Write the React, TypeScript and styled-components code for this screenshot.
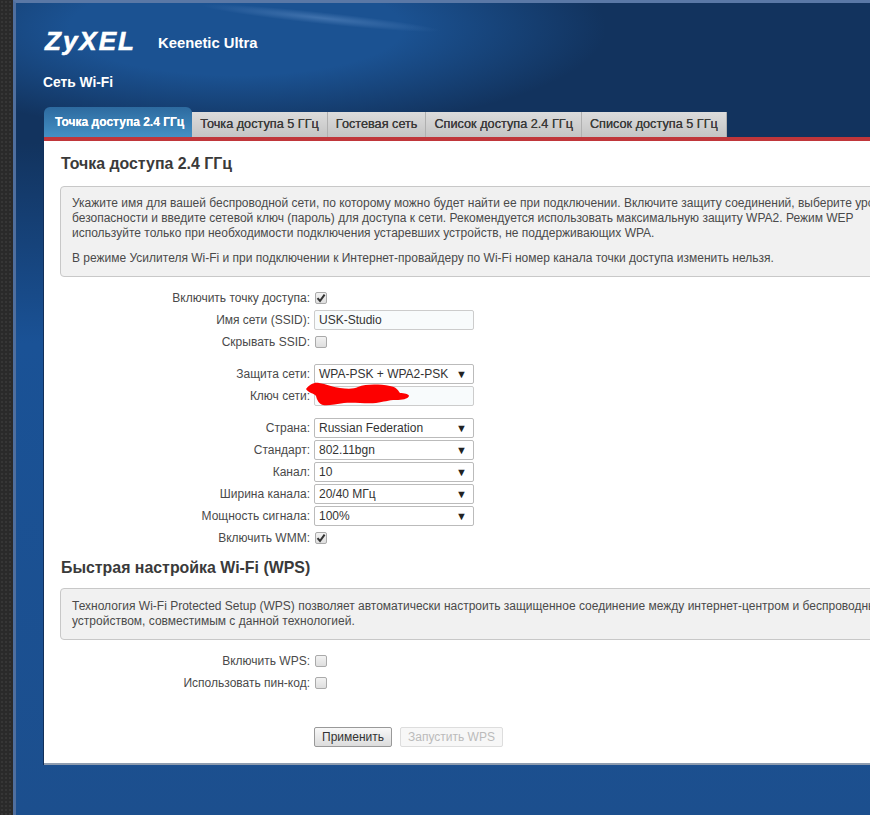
import React from 'react';
import styled, { createGlobalStyle } from 'styled-components';

const GlobalStyle = createGlobalStyle`
	html, body {
		margin: 0;
		padding: 0;
		background: #1c4f8e;
	}
	body {
		width: 870px;
		height: 815px;
		overflow: hidden;
		font-family: "Liberation Sans", Arial, sans-serif;
		font-size: 12px;
		color: #333;
	}
`;

const Page = styled.div`
	display: flex;
	width: 870px;
	height: 815px;
	overflow: hidden;
`;

const DarkStrip = styled.div`
	flex: 0 0 14px;
	background-color: #2a2a2a;
	background-image: radial-gradient(#363636 1px, transparent 1px);
	background-size: 4px 4px;
`;

const Main = styled.main`
	position: relative;
	flex: 1;
	min-width: 0;
	box-sizing: border-box;
	padding: 21px 0 0 28px;
	border-left: 3px solid #4f6f9f;
	border-top: 3px solid #5a78a6;
	margin-left: -1px;
	overflow: hidden;
	background:
		radial-gradient(ellipse 370px 105px at 220px 25px, #1b5292 0%, #1b5292 45%, rgba(27, 82, 146, 0) 100%),
		linear-gradient(180deg, #12335e 0, #12335e 140px, #1a5296 340px, #1c4f8e 100%);
	&::before {
		content: '';
		position: absolute;
		left: 185px;
		top: 9px;
		width: 240px;
		height: 12px;
		transform: rotate(6deg);
		background: radial-gradient(ellipse closest-side, rgba(100, 145, 200, 0.5), rgba(100, 145, 200, 0));
	}
`;

const Brand = styled.div`
	display: flex;
	align-items: center;
	height: 38px;
	color: #fff;
`;

const Logo = styled.span`
	font-size: 26px;
	font-weight: bold;
	font-style: italic;
	letter-spacing: 2px;
	-webkit-text-stroke: 0.6px #fff;
	width: 113px;
	margin: -3px 0 0 1px;
`;

const Model = styled.span`
	font-size: 14.8px;
	font-weight: bold;
`;

const PageTitle = styled.h1`
	margin: 12px 0 0 -1px;
	height: 18px;
	font-size: 13.8px;
	line-height: 18px;
	font-weight: bold;
	color: #fff;
`;

const Tabs = styled.nav`
	display: flex;
	align-items: flex-end;
	height: 30px;
	margin-top: 15px;
`;

const Tab = styled.div<{ $active?: boolean }>`
	box-sizing: border-box;
	height: ${(p) => (p.$active ? '30px' : '25px')};
	padding: ${(p) => (p.$active ? '7px 8px 0 11px' : '4px 8px 0 8px')};
	border-right: ${(p) => (p.$active ? 'none' : '1px solid #b0b0b0')};
	border-radius: ${(p) => (p.$active ? '6px 6px 0 0' : '0')};
	background: ${(p) =>
		p.$active ? 'linear-gradient(180deg, #2d6a9f 0%, #4490c4 100%)' : 'linear-gradient(180deg, #dcdcdc 0%, #c4c4c4 100%)'};
	color: ${(p) => (p.$active ? '#fff' : '#3a3a3a')};
	font-size: ${(p) => (p.$active ? '12px' : '12.7px')};
	line-height: 16px;
	font-weight: ${(p) => (p.$active ? 'bold' : 'normal')};
	white-space: nowrap;
	text-shadow: 0 0 0.5px currentColor;
`;

const Panel = styled.section`
	box-sizing: border-box;
	width: 900px;
	height: 628px;
	padding: 13px 0 0 16px;
	background: #fff;
	border-top: 4px solid #c0363a;
	border-bottom: 2px solid #8f9db0;
	box-shadow: -1px 0 0 #12305a;
`;

const SectionTitle = styled.h2`
	margin: 0 0 0 1px;
	height: 20px;
	font-size: 15.9px;
	line-height: 20px;
	font-weight: bold;
	color: #3a3a3a;
`;

const InfoBox = styled.div<{ $top: number; $inset: number }>`
	box-sizing: border-box;
	margin-top: ${(p) => p.$top}px;
	padding: ${(p) => p.$inset}px 11px 10px;
	background: #f1f1f1;
	border: 1px solid #c8c8c8;
	border-radius: 4px;
	color: #4a4a4a;
	font-size: 12px;
	line-height: 15px;
	p {
		margin: 0 0 10px;
		white-space: nowrap;
	}
	p:last-child {
		margin-bottom: 0;
	}
`;

const Form = styled.div`
	margin-top: 10px;
`;

const Group = styled.div`
	margin-bottom: 10px;
	&:last-child {
		margin-bottom: 9px;
	}
`;

const Row = styled.div`
	display: grid;
	grid-template-columns: 250px 160px;
	column-gap: 4px;
	align-items: center;
	height: 22px;
`;

const Label = styled.label`
	text-align: right;
	color: #4a4a4a;
	white-space: nowrap;
`;

const TextField = styled.div`
	box-sizing: border-box;
	width: 160px;
	height: 20px;
	padding: 0 4px;
	border: 1px solid #ccc;
	border-radius: 2px;
	background: #f8fbfc;
	line-height: 18px;
	color: #333;
`;

const SelectBox = styled.div`
	box-sizing: border-box;
	display: flex;
	justify-content: space-between;
	width: 160px;
	height: 20px;
	padding: 0 6px 0 4px;
	border: 1px solid #bbb;
	border-radius: 2px;
	background: #fff;
	line-height: 18px;
	color: #333;
	white-space: nowrap;
`;

const Arrow = styled.span`
	font-size: 11px;
	color: #222;
`;

const CheckBox = styled.span`
	box-sizing: border-box;
	display: flex;
	align-items: center;
	justify-content: center;
	width: 12px;
	height: 12px;
	margin-left: 1px;
	border: 1px solid #aaa;
	border-radius: 2px;
	background: linear-gradient(180deg, #f2f2f2, #dedede);
`;

const Actions = styled.div`
	display: flex;
	gap: 8px;
	margin: 33px 0 0 254px;
`;

const Button = styled.button<{ $disabled?: boolean }>`
	box-sizing: border-box;
	height: 20px;
	padding: 0 7px;
	font: 12px/18px "Liberation Sans", Arial, sans-serif;
	color: ${(p) => (p.$disabled ? '#bbb' : '#333')};
	border: 1px solid ${(p) => (p.$disabled ? '#ddd' : '#999')};
	border-radius: 2px;
	background: ${(p) => (p.$disabled ? '#f7f7f7' : 'linear-gradient(180deg, #f8f8f8, #dcdcdc)')};
`;

const KeyCell = styled.div`
	position: relative;
`;

const Scribble = styled.svg`
	position: absolute;
	left: -8px;
	top: -4px;
	width: 104px;
	height: 24px;
	pointer-events: none;
`;

const Check = () => (
	<svg width="10" height="10" viewBox="0 0 10 10">
		<path d="M1.5 5.2 L4 8 L8.6 1.6" fill="none" stroke="#333" strokeWidth="2" />
	</svg>
);

type Field =
	| { label: string; kind: 'check'; checked?: boolean }
	| { label: string; kind: 'text'; value: string }
	| { label: string; kind: 'select'; value: string }
	| { label: string; kind: 'key' };

const groups: Field[][] = [
	[
		{ label: 'Включить точку доступа:', kind: 'check', checked: true },
		{ label: 'Имя сети (SSID):', kind: 'text', value: 'USK-Studio' },
		{ label: 'Скрывать SSID:', kind: 'check' },
	],
	[
		{ label: 'Защита сети:', kind: 'select', value: 'WPA-PSK + WPA2-PSK' },
		{ label: 'Ключ сети:', kind: 'key' },
	],
	[
		{ label: 'Страна:', kind: 'select', value: 'Russian Federation' },
		{ label: 'Стандарт:', kind: 'select', value: '802.11bgn' },
		{ label: 'Канал:', kind: 'select', value: '10' },
		{ label: 'Ширина канала:', kind: 'select', value: '20/40 МГц' },
		{ label: 'Мощность сигнала:', kind: 'select', value: '100%' },
		{ label: 'Включить WMM:', kind: 'check', checked: true },
	],
];

const wps: Field[] = [
	{ label: 'Включить WPS:', kind: 'check' },
	{ label: 'Использовать пин-код:', kind: 'check' },
];

const FieldRow = ({ field }: { field: Field }) => (
	<Row>
		<Label>{field.label}</Label>
		{field.kind === 'check' && <CheckBox>{field.checked && <Check />}</CheckBox>}
		{field.kind === 'text' && <TextField>{field.value}</TextField>}
		{field.kind === 'select' && (
			<SelectBox>
				{field.value}
				<Arrow>▼</Arrow>
			</SelectBox>
		)}
		{field.kind === 'key' && (
			<KeyCell>
				<TextField />
				<Scribble viewBox="0 0 104 24">
					<path
						d="M0 7 C3 3 8 0 13 1 C20 2 26 5 34 6 C42 7 48 7 52 5 C60 2 72 2 84 4 C90 5 92 8 94 11 C98 11 103 12 103 14 C102 17 96 18 90 18 C82 18 78 20 70 21 C60 22 48 20 38 21 C30 22 22 24 17 23 C13 22 11 18 10 14 C8 11 2 11 0 7 Z"
						fill="#fd0000"
					/>
				</Scribble>
			</KeyCell>
		)}
	</Row>
);

const App = () => {
	return (
		<Page>
			<GlobalStyle />
			<DarkStrip />
			<Main>
				<Brand>
					<Logo>ZyXEL</Logo>
					<Model>Keenetic Ultra</Model>
				</Brand>
				<PageTitle>Сеть Wi-Fi</PageTitle>
				<Tabs>
					<Tab $active>Точка доступа 2.4 ГГц</Tab>
					<Tab>Точка доступа 5 ГГц</Tab>
					<Tab>Гостевая сеть</Tab>
					<Tab>Список доступа 2.4 ГГц</Tab>
					<Tab>Список доступа 5 ГГц</Tab>
				</Tabs>
				<Panel>
					<SectionTitle>Точка доступа 2.4 ГГц</SectionTitle>
					<InfoBox $top={12} $inset={9}>
						<p>
							Укажите имя для вашей беспроводной сети, по которому можно будет найти ее при подключении. Включите защиту соединений, выберите уровень
							<br />
							безопасности и введите сетевой ключ (пароль) для доступа к сети. Рекомендуется использовать максимальную защиту WPA2. Режим WEP
							<br />
							используйте только при необходимости подключения устаревших устройств, не поддерживающих WPA.
						</p>
						<p>В режиме Усилителя Wi-Fi и при подключении к Интернет-провайдеру по Wi-Fi номер канала точки доступа изменить нельзя.</p>
					</InfoBox>
					<Form>
						{groups.map((group, i) => (
							<Group key={i}>
								{group.map((field) => (
									<FieldRow key={field.label} field={field} />
								))}
							</Group>
						))}
					</Form>
					<SectionTitle>Быстрая настройка Wi-Fi (WPS)</SectionTitle>
					<InfoBox $top={10} $inset={10}>
						<p>
							Технология Wi-Fi Protected Setup (WPS) позволяет автоматически настроить защищенное соединение между интернет-центром и беспроводным
							<br />
							устройством, совместимым с данной технологией.
						</p>
					</InfoBox>
					<Form>
						{wps.map((field) => (
							<FieldRow key={field.label} field={field} />
						))}
					</Form>
					<Actions>
						<Button>Применить</Button>
						<Button $disabled>Запустить WPS</Button>
					</Actions>
				</Panel>
			</Main>
		</Page>
	);
};

export default App;
